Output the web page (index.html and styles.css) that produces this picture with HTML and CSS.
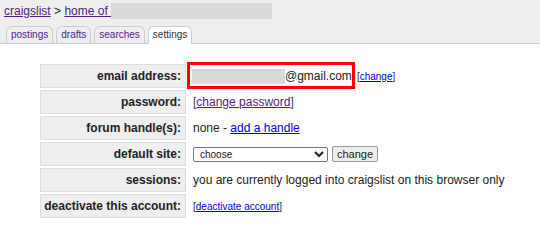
FILE: index.html
```html
<!DOCTYPE html>
<html>
<head>
<meta charset="utf-8">
<title>craigslist account settings</title>
<link rel="stylesheet" href="styles.css">
</head>
<body>
<div class="header">
  <div class="crumb">
    <a class="visited" href="#">craigslist</a> &gt; <a class="visited" href="#">home of <span class="redact-head"></span></a>
  </div>
  <div class="tabs">
    <a class="tab" href="#">postings</a>
    <a class="tab" href="#">drafts</a>
    <a class="tab" href="#">searches</a>
    <span class="tab selected">settings</span>
  </div>
</div>
<div class="settings">
  <div class="label">email address:</div>
  <div class="value email">
    <span class="redact"></span>@gmail.com<span class="small gap">[<a class="link" href="#">change</a>]</span>
    <span class="annotation"></span>
  </div>

  <div class="label">password:</div>
  <div class="value"><span class="bracket">[</span><a class="visited" href="#">change password</a><span class="bracket">]</span></div>

  <div class="label">forum handle(s):</div>
  <div class="value">none -&nbsp;<a class="link" href="#">add a handle</a></div>

  <div class="label">default site:</div>
  <div class="value">
    <select class="site"><option>choose</option></select>
    <button class="btn">change</button>
  </div>

  <div class="label">sessions:</div>
  <div class="value">you are currently logged into craigslist on this browser only</div>

  <div class="label">deactivate this account:</div>
  <div class="value"><span class="small">[<a class="link" href="#">deactivate account</a>]</span></div>
</div>
</body>
</html>
```
FILE: styles.css
```css
html, body {
  margin: 0;
  padding: 0;
  background: #fff;
}
body {
  font-family: "Liberation Sans", Arial, sans-serif;
  font-size: 12px;
  color: #222;
}
a.visited {
  color: #551a8b;
  text-decoration: underline;
}
a.link {
  color: #0000ee;
  text-decoration: underline;
}
.header {
  background: #eeeeee;
  border-bottom: 1px solid #cccccc;
  padding: 3px 0 0 4px;
}
.crumb {
  height: 16px;
  line-height: 16px;
  display: flex;
  align-items: center;
  white-space: pre;
}
.redact-head {
  display: inline-block;
  width: 161px;
  height: 16px;
  background: #d9d9d9;
  vertical-align: top;
}
.tabs {
  display: flex;
  gap: 3px;
  margin-top: 7px;
  padding-left: 2px;
  height: 17px;
  align-items: flex-start;
}
.tab {
  box-sizing: border-box;
  height: 17px;
  border: 1px solid #cccccc;
  border-bottom: none;
  border-radius: 6px 6px 0 0;
  padding: 1px 4px 0;
  font-size: 10px;
  line-height: 14px;
  color: #551a8b;
  text-decoration: none;
  background: #eeeeee;
}
.tab.selected {
  background: #ffffff;
  color: #333333;
  height: 18px;
  position: relative;
  z-index: 1;
}
.settings {
  display: grid;
  grid-template-columns: 146px auto;
  grid-auto-rows: 24px;
  gap: 2px;
  margin: 20px 0 0 40px;
}
.label {
  box-sizing: border-box;
  background: #eeeeee;
  border: 1px solid #dddddd;
  text-align: right;
  font-weight: bold;
  line-height: 22px;
  padding-right: 4px;
  white-space: nowrap;
}
.value {
  display: flex;
  align-items: center;
  padding-left: 5px;
  white-space: nowrap;
}
.email {
  position: relative;
}
.redact {
  display: inline-block;
  width: 93px;
  height: 15px;
  background: #d9d9d9;
  margin-left: -1px;
}
.small {
  font-size: 10px;
  color: #333;
}
.gap {
  margin-left: 5px;
}
.bracket {
  color: #444;
}
.annotation {
  position: absolute;
  left: -1px;
  top: -2px;
  width: 168px;
  height: 27px;
  box-sizing: border-box;
  border: 3px solid #ff0000;
  pointer-events: none;
}
.site {
  box-sizing: border-box;
  width: 135px;
  height: 15px;
  font-family: "Liberation Sans", Arial, sans-serif;
  font-size: 10px;
  padding: 0 0 0 2px;
  border: 1px solid #767676;
  border-radius: 2px;
  background: #fff;
  color: #222;
  margin: 0;
}
.btn {
  box-sizing: border-box;
  width: 46px;
  height: 16px;
  margin: 0 0 0 4px;
  padding: 0;
  font-family: "Liberation Sans", Arial, sans-serif;
  font-size: 11px;
  line-height: 14px;
  color: #222;
  background: #efefef;
  border: 1px solid #999;
  border-radius: 2px;
}
```
